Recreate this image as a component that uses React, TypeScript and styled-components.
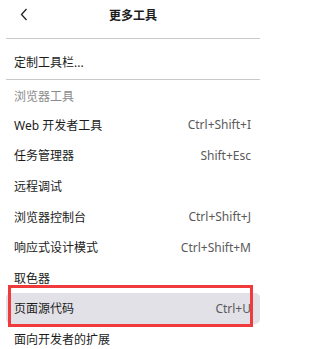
import { FunctionComponent } from "react";
import styled, { createGlobalStyle } from "styled-components";

const GlobalStyle = createGlobalStyle`
    html, body {
        margin: 0;
        padding: 0;
        background: #ffffff;
    }
    body {
        font-family: "Noto Sans", "Noto Sans CJK SC", sans-serif;
        color: #1c1c1c;
    }
`;

const Panel = styled.main`
    width: 268px;
    height: 349px;
    overflow: hidden;
    padding: 0 8px 0 6px;
    box-sizing: border-box;
`;

const Header = styled.header`
    height: 39px;
    display: grid;
    grid-template-columns: 28px 1fr 28px;
    align-items: center;
    border-bottom: 1px solid #c9c9c9;
    box-sizing: border-box;
    padding-bottom: 9px;
`;

const BackButton = styled.button`
    border: none;
    background: none;
    padding: 0 0 0 14px;
    display: flex;
    align-items: center;
    cursor: pointer;
`;

const Title = styled.h1`
    margin: 0;
    font-size: 12px;
    font-weight: 700;
    text-align: center;
    letter-spacing: 0;
`;

const Section = styled.section<{ $divided?: boolean }>`
    border-bottom: ${(p) => (p.$divided ? "1px solid #c9c9c9" : "none")};
    padding: ${(p) => (p.$divided ? "8px 0 1px" : "2px 0 0")};
`;

const GroupLabel = styled.div`
    height: 28px;
    display: flex;
    align-items: center;
    padding-left: 8px;
    font-size: 12px;
    color: #8b8b8b;
`;

const Row = styled.div<{ $active?: boolean }>`
    position: relative;
    height: 30.6px;
    display: flex;
    align-items: center;
    justify-content: space-between;
    padding: 0 9px 0 8px;
    font-size: 12px;
    border-radius: 5px;
    background: ${(p) => (p.$active ? "#e2e1e7" : "transparent")};
`;

const Shortcut = styled.span`
    color: #5a5a5a;
    font-size: 12px;
`;

const Callout = styled.div`
    position: absolute;
    left: 2px;
    right: 7px;
    top: -8px;
    bottom: -3px;
    border: 3px solid #ef3b3b;
    pointer-events: none;
`;

interface Item {
    label: string;
    shortcut?: string;
    active?: boolean;
}

const items: Item[] = [
    { label: "Web 开发者工具", shortcut: "Ctrl+Shift+I" },
    { label: "任务管理器", shortcut: "Shift+Esc" },
    { label: "远程调试" },
    { label: "浏览器控制台", shortcut: "Ctrl+Shift+J" },
    { label: "响应式设计模式", shortcut: "Ctrl+Shift+M" },
    { label: "取色器" },
    { label: "页面源代码", shortcut: "Ctrl+U", active: true },
    { label: "面向开发者的扩展" },
];

const App: FunctionComponent = () => {
    return (
        <>
            <GlobalStyle />
            <Panel>
                <Header>
                    <BackButton aria-label="back">
                        <svg width="8" height="13" viewBox="0 0 8 13">
                            <path d="M6.5 1 L1.5 6.5 L6.5 12" fill="none" stroke="#222" strokeWidth="1.3" />
                        </svg>
                    </BackButton>
                    <Title>更多工具</Title>
                    <span />
                </Header>

                <Section $divided>
                    <Row>定制工具栏...</Row>
                </Section>

                <Section>
                    <GroupLabel>浏览器工具</GroupLabel>
                    {items.map((item) => (
                        <Row key={item.label} $active={item.active}>
                            <span>{item.label}</span>
                            {item.shortcut && <Shortcut>{item.shortcut}</Shortcut>}
                            {item.active && <Callout />}
                        </Row>
                    ))}
                </Section>
            </Panel>
        </>
    );
};

export default App;
